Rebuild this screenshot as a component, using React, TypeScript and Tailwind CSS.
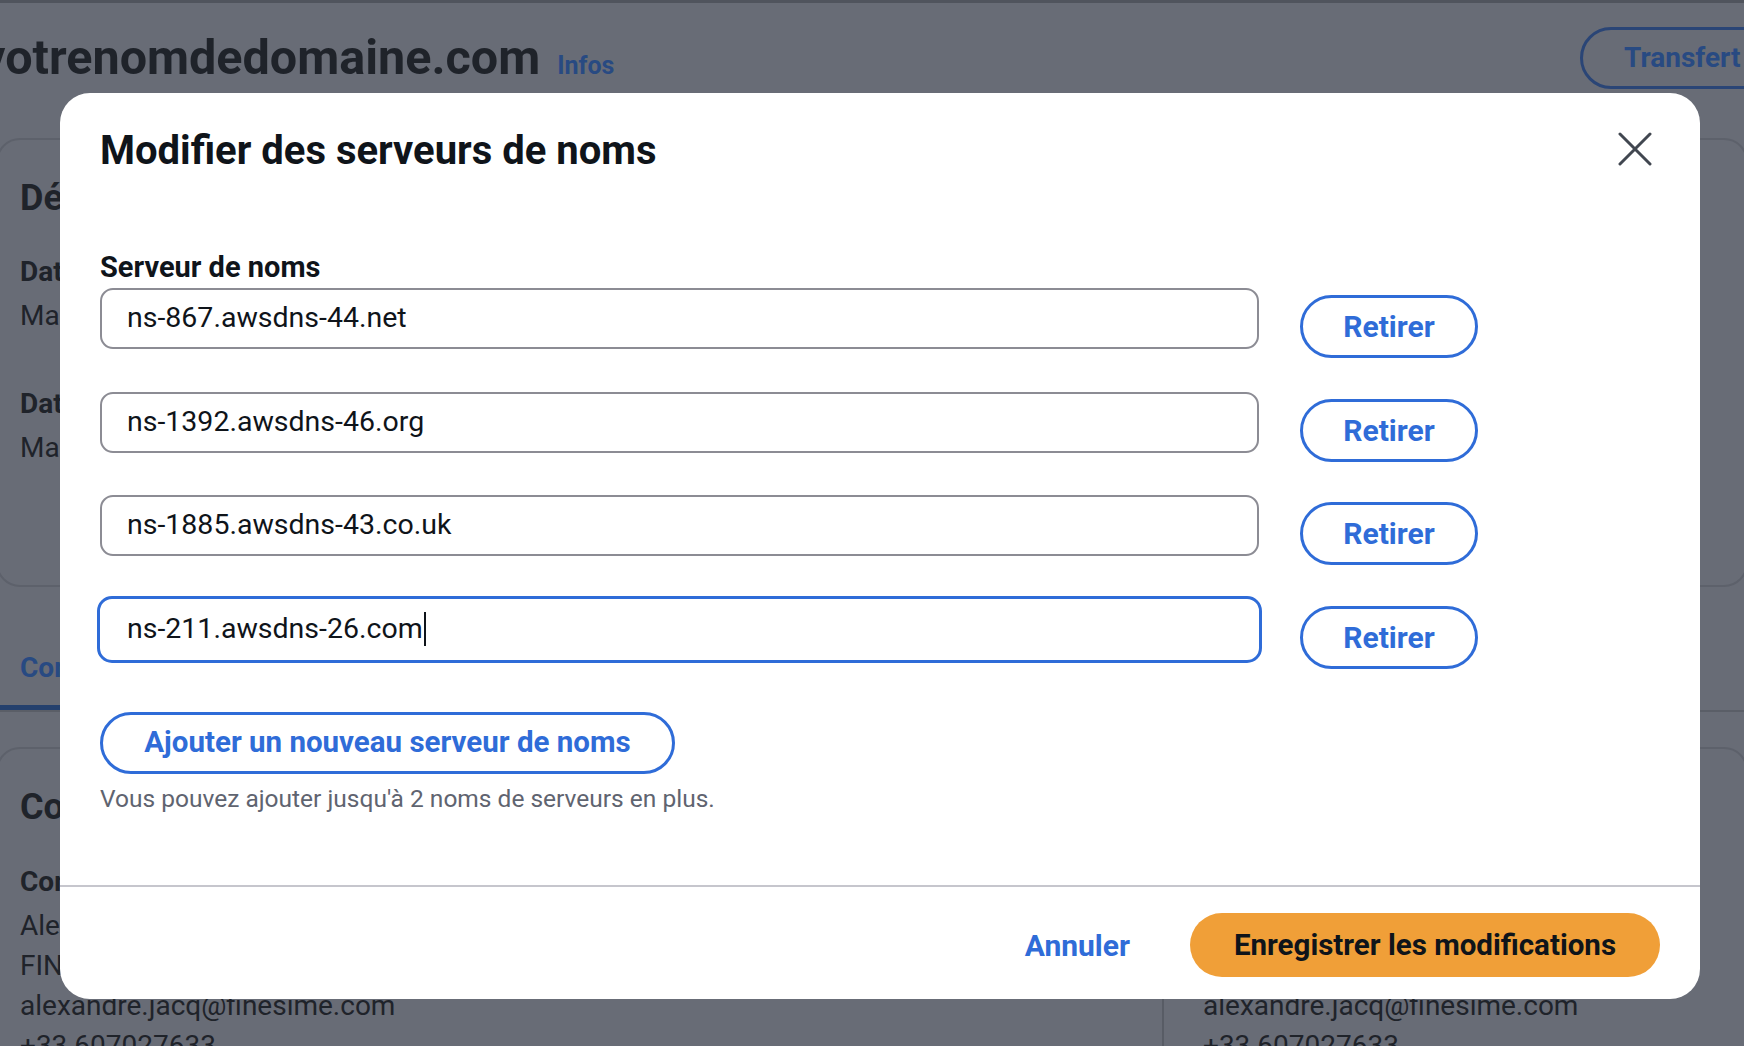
import React from "react";

const servers = [
  "ns-867.awsdns-44.net",
  "ns-1392.awsdns-46.org",
  "ns-1885.awsdns-43.co.uk",
  "ns-211.awsdns-26.com",
];

function CloseIcon() {
  return (
    <svg width="34" height="34" viewBox="0 0 34 34" fill="none">
      <path d="M2 2 L32 32 M32 2 L2 32" stroke="#414750" strokeWidth="3" strokeLinecap="round" />
    </svg>
  );
}

function ServerRow({ value, focused }: { value: string; focused?: boolean }) {
  return (
    <div className="flex items-start">
      <div
        className={
          focused
            ? "-mx-[3px] -my-[3px] flex h-[67px] w-[1165px] items-center rounded-[15px] border-[3px] border-[#2f6cd8] pl-[27px] text-[28.5px] text-[#0f141a]"
            : "flex h-[61px] w-[1159px] items-center rounded-[13px] border-2 border-[#8c8c94] pl-[25px] text-[28.5px] text-[#0f141a]"
        }
      >
        <span>{value}</span>
        {focused && <span className="ml-[1px] inline-block h-[34px] w-[2px] bg-[#0f141a]" />}
      </div>
      <button className="ml-[41px] mt-[7px] flex h-[63px] w-[178px] items-center justify-center rounded-full border-[3px] border-[#2f6cd8] text-[30px] font-bold text-[#2f6cd8]">
        Retirer
      </button>
    </div>
  );
}

function Modal() {
  return (
    <div className="absolute left-[60px] top-[93px] flex h-[906px] w-[1640px] flex-col rounded-[30px] bg-white">
      <div className="flex-1 px-[40px]">
        <div className="flex items-center justify-between pt-[34px] pr-[1px]">
          <h2 className="text-[40px] font-bold leading-[48px] text-[#0f141a]">Modifier des serveurs de noms</h2>
          <button className="-mt-[4px] flex h-[48px] w-[48px] items-center justify-center">
            <CloseIcon />
          </button>
        </div>

        <div className="mt-[72px] text-[29px] font-bold leading-[40px] text-[#0f141a]">Serveur de noms</div>
        <div className="mt-[1px] flex flex-col gap-[33.5px]">
          {servers.map((s, i) => (
            <ServerRow key={s} value={s} focused={i === 3} />
          ))}
        </div>

        <button className="mt-[43px] flex h-[62px] w-[575px] items-center justify-center rounded-full border-[3px] border-[#2f6cd8] text-[29.5px] font-bold text-[#2f6cd8]">
          Ajouter un nouveau serveur de noms
        </button>
        <p className="mt-[9px] text-[24.5px] leading-[32px] text-[#5f6470]">
          Vous pouvez ajouter jusqu'à 2 noms de serveurs en plus.
        </p>
      </div>

      <div className="flex items-center justify-end gap-[60px] border-t-2 border-[#c6c6cd] pt-[26px] pb-[22px] pr-[40px]">
        <button className="text-[30px] font-bold text-[#2f6cd8]">Annuler</button>
        <button className="flex h-[64px] w-[470px] items-center justify-center rounded-full bg-[#f09f38] text-[29.5px] font-bold text-[#0f141a]">
          Enregistrer les modifications
        </button>
      </div>
    </div>
  );
}

function Background() {
  return (
    <div className="text-[#1f232a]">
      <div className="h-[3px] bg-[#50545d]" />
      <header className="mt-[24px] flex h-[62px] items-center justify-between">
        <div className="-ml-[19px] flex items-baseline gap-[17px]">
          <h1 className="text-[48.5px] font-bold leading-[56px]">votrenomdedomaine.com</h1>
          <span className="text-[25px] font-bold text-[#284a82]">Infos</span>
        </div>
        <div className="-mr-[60px] flex h-[62px] w-[224px] items-center rounded-full border-[3px] border-[#2a4576] pl-[41px] text-[28px] font-bold text-[#284a82]">
          Transfert
        </div>
      </header>

      <section className="-mx-[4px] mt-[49px] rounded-[24px] border-2 border-[#5d616b] px-[22px] pt-[34px] pb-[115px]">
        <h2 className="text-[36px] font-bold leading-[48px]">Détails du domaine</h2>
        <div className="mt-[28px] text-[28px] leading-[44px]">
          <div className="font-bold">Date d'enregistrement</div>
          <div>Mars 12, 2024</div>
        </div>
        <div className="mt-[44px] text-[28px] leading-[44px]">
          <div className="font-bold">Date d'expiration</div>
          <div>Mars 12, 2025</div>
        </div>
      </section>

      <nav className="mt-[61px] flex border-b-2 border-[#5a5e67]">
        <div className="-ml-[4px] border-b-[5px] border-[#24406d] pl-[24px] pr-[30px] pb-[17px] text-[28px] font-bold leading-[40px] text-[#284a82]">
          Contacts
        </div>
      </nav>

      <section className="-mx-[4px] mt-[35px] rounded-[24px] border-2 border-[#5d616b] px-[22px] pt-[34px]">
        <h2 className="text-[36px] font-bold leading-[48px]">Contacts du domaine</h2>
        <div className="mt-[31px] flex text-[28px] leading-[40px]">
          <div className="w-[1142px]">
            <div className="font-bold">Contact du titulaire</div>
            <div className="mt-[4px]">Alexandre Jacq</div>
            <div>FINESIME</div>
            <div>alexandre.jacq@finesime.com</div>
            <div>+33 607027633</div>
          </div>
          <div className="border-l-2 border-[#585c65] pl-[39px]">
            <div className="font-bold">Contact technique</div>
            <div className="mt-[4px]">Alexandre Jacq</div>
            <div>FINESIME</div>
            <div>alexandre.jacq@finesime.com</div>
            <div>+33 607027633</div>
          </div>
        </div>
      </section>
    </div>
  );
}

export default function App() {
  return (
    <div
      className="relative h-[1046px] w-full overflow-hidden bg-[#686c76]"
      style={{ fontFamily: "Roboto, 'Liberation Sans', sans-serif" }}
    >
      <Background />
      <Modal />
    </div>
  );
}
